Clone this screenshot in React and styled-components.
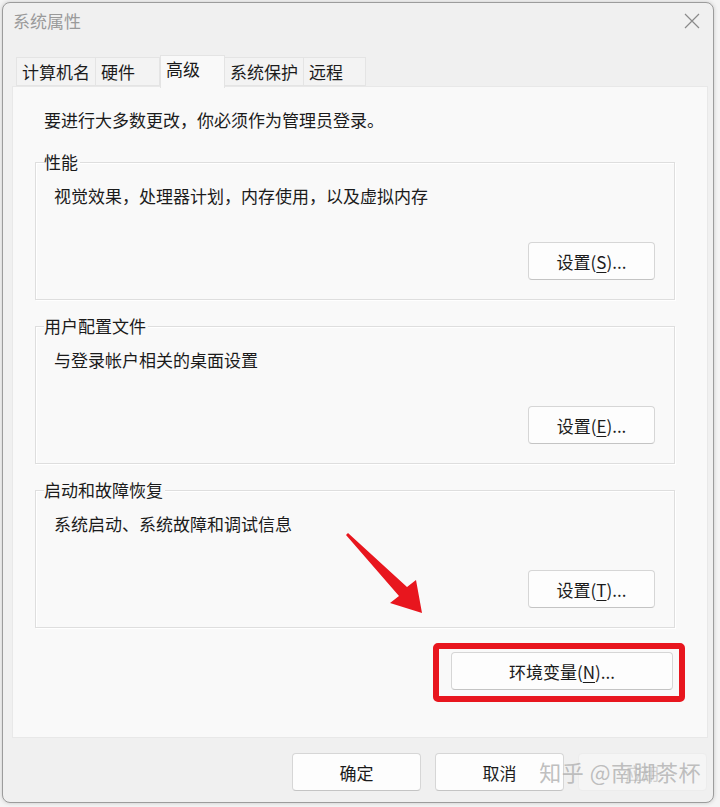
import React from 'react'
import styled, { createGlobalStyle } from 'styled-components'

const GlobalStyle = createGlobalStyle`
  html, body {
    margin: 0;
    padding: 0;
    background: #f4f4f4;
  }
  body {
    font-family: "Noto Sans CJK SC", "Noto Sans", sans-serif;
    color: #1b1b1b;
  }
`

const Window = styled.div`
  position: relative;
  width: 710px;
  height: 799px;
  margin: 2px 6px 4px 2px;
  border: 1px solid #9c9c9c;
  border-radius: 8px;
  background: #f0f0f0;
  box-shadow: 0 0 4px rgba(0, 0, 0, 0.18);
  display: flex;
  flex-direction: column;
`

const TitleBar = styled.div`
  height: 40px;
  display: flex;
  align-items: center;
  justify-content: space-between;
  padding: 0 12px 0 10px;
`

const Title = styled.span`
  font-size: 17px;
  color: #9a9a9a;
  line-height: 20px;
  margin-top: -5px;
`

const CloseBtn = styled.span`
  display: flex;
  width: 18px;
  height: 18px;
  margin-top: -4px;
`

const TabStrip = styled.div`
  display: flex;
  align-items: flex-end;
  padding-left: 13px;
  margin-top: 10px;
  height: 33px;
  position: relative;
  z-index: 1;
`

const Tab = styled.div`
  width: ${p => p.$w}px;
  height: ${p => (p.$active ? '33px' : '29px')};
  padding: ${p => (p.$active ? '3px 0 0 5px' : '0 0 0 5px')};
  margin-bottom: ${p => (p.$active ? '-2px' : '0')};
  display: flex;
  align-items: ${p => (p.$active ? 'flex-start' : 'center')};
  box-sizing: border-box;
  font-size: 17px;
  line-height: 20px;
  background: ${p => (p.$active ? '#f9f9f9' : '#f3f3f3')};
  border: 1px solid #e4e4e4;
  border-left: ${p => (p.$first || p.$active ? '1px solid #e4e4e4' : 'none')};
  border-bottom: ${p => (p.$active ? 'none' : '1px solid #e4e4e4')};
  color: #1b1b1b;
  white-space: nowrap;
`

const Panel = styled.div`
  position: relative;
  margin: 0 5px 0 9px;
  height: 652px;
  box-sizing: border-box;
  background: #f9f9f9;
  border: 1px solid #e8e8e8;
  padding: 23px 22px 0 22px;
`

const Notice = styled.div`
  font-size: 17px;
  line-height: 20px;
  margin-left: 9px;
`

const Group = styled.div`
  position: relative;
  height: 138px;
  box-sizing: border-box;
  margin-top: ${p => p.$top}px;
  width: 640px;
  border: 1px solid #dedede;
  box-shadow: inset 1px 1px 0 #ffffff, 1px 1px 0 #ffffff;
  padding: 0 19px 19px 18px;
  display: flex;
  flex-direction: column;
`

const Legend = styled.span`
  position: absolute;
  top: -12px;
  left: 8px;
  padding-right: 2px;
  background: #f9f9f9;
  font-size: 17px;
  line-height: 22px;
`

const Desc = styled.div`
  margin-top: 23px;
  font-size: 17px;
  line-height: 20px;
`

const Button = styled.button`
  width: ${p => p.$w || 127}px;
  height: 38px;
  box-sizing: border-box;
  background: ${p => (p.$disabled ? '#f5f5f5' : '#fdfdfd')};
  border: 1px solid ${p => (p.$disabled ? '#ececec' : '#d6d6d6')};
  border-bottom-color: ${p => (p.$disabled ? '#ececec' : '#c4c4c4')};
  border-radius: 4px;
  font-family: "Noto Sans CJK SC", "Noto Sans", sans-serif;
  font-size: 17px;
  color: ${p => (p.$disabled ? '#cfcfcf' : '#1b1b1b')};
  padding: 0;
  display: flex;
  align-items: center;
  justify-content: center;
`

const GroupButton = styled(Button)`
  align-self: flex-end;
  margin-top: auto;
`

const Key = styled.span`
  text-decoration: underline;
  text-underline-offset: 3px;
`

const EnvRow = styled.div`
  display: flex;
  justify-content: flex-end;
  margin-top: 15px;
`

const Highlight = styled.div`
  border: 6px solid #e8161e;
  border-radius: 5px;
  padding: 3px 6px 6px 12px;
`

const Arrow = styled.svg`
  position: absolute;
  left: 325px;
  top: 436px;
  width: 90px;
  height: 100px;
  overflow: visible;
`

const Footer = styled.div`
  position: relative;
  display: flex;
  justify-content: flex-end;
  gap: 14px;
  padding: 15px 6px 0 0;
`

const Watermark = styled.span`
  position: absolute;
  right: 12px;
  top: 20px;
  font-size: 22px;
  line-height: 26px;
  color: rgba(175, 175, 175, 0.8);
  letter-spacing: 0.5px;
  pointer-events: none;
`

const groups = [
  { title: '性能', desc: '视觉效果，处理器计划，内存使用，以及虚拟内存', key: 'S', top: 32 },
  { title: '用户配置文件', desc: '与登录帐户相关的桌面设置', key: 'E', top: 26 },
  { title: '启动和故障恢复', desc: '系统启动、系统故障和调试信息', key: 'T', top: 26 },
]

const tabs = [
  { label: '计算机名', w: 80 },
  { label: '硬件', w: 64 },
  { label: '高级', w: 65 },
  { label: '系统保护', w: 79 },
  { label: '远程', w: 62 },
]

export default function App() {
  return (
    <>
      <GlobalStyle />
      <Window>
        <TitleBar>
          <Title>系统属性</Title>
          <CloseBtn>
            <svg width="18" height="18" viewBox="0 0 18 18">
              <path d="M2 2 L16 16 M16 2 L2 16" stroke="#8a8a8a" strokeWidth="1.2" fill="none" />
            </svg>
          </CloseBtn>
        </TitleBar>
        <TabStrip>
          {tabs.map((t, i) => (
            <Tab key={t.label} $w={t.w} $first={i === 0} $active={t.label === '高级'}>
              {t.label}
            </Tab>
          ))}
        </TabStrip>
        <Panel>
          <Notice>要进行大多数更改，你必须作为管理员登录。</Notice>
          {groups.map(g => (
            <Group key={g.title} $top={g.top}>
              <Legend>{g.title}</Legend>
              <Desc>{g.desc}</Desc>
              <GroupButton>
                设置(<Key>{g.key}</Key>)...
              </GroupButton>
            </Group>
          ))}
          <EnvRow>
            <Highlight>
              <Button $w={222}>
                环境变量(<Key>N</Key>)...
              </Button>
            </Highlight>
          </EnvRow>
          <Arrow viewBox="0 0 90 100">
            <polygon
              points="10,10 69,64 78,57 84,90 52,80 61,73 8,12"
              fill="#e8161e"
            />
          </Arrow>
        </Panel>
        <Footer>
          <Button $w={129}>确定</Button>
          <Button $w={129}>取消</Button>
          <Button $w={129} $disabled>应用</Button>
          <Watermark>知乎 @南脚茶杯</Watermark>
        </Footer>
      </Window>
    </>
  )
}
